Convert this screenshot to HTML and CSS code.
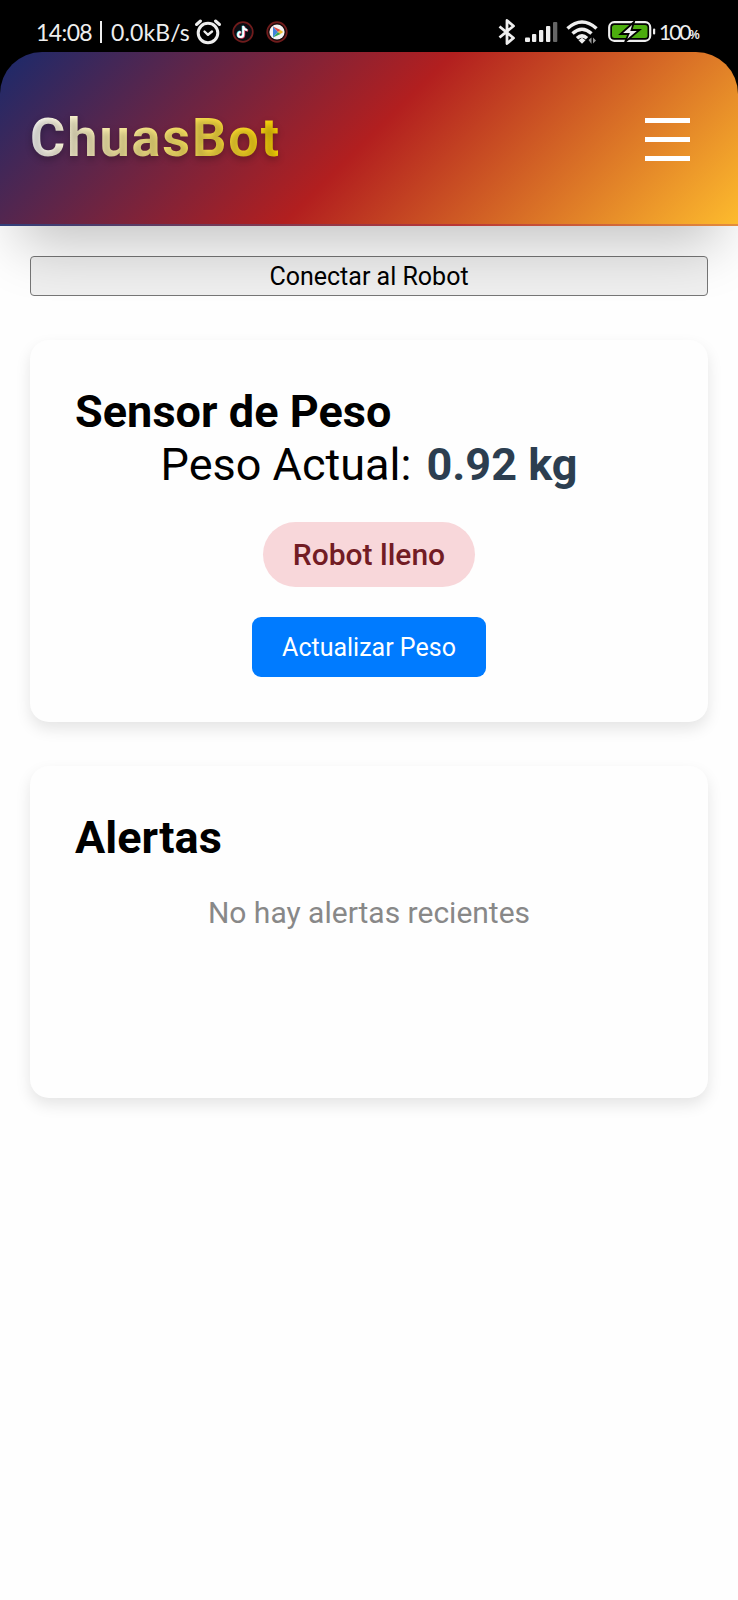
FILE: index.html
```html
<!DOCTYPE html>
<html lang="es">
<head>
<meta charset="utf-8">
<title>ChuasBot</title>
<link rel="stylesheet" href="styles.css">
</head>
<body>
<div class="top">
  <div class="status">
    <div class="status-left">
      <span class="clock">14:08</span><span class="divider"></span><span class="speed">0.0kB/s</span>
      <svg class="alarm" width="28" height="28" viewBox="0 0 28 28" fill="none" stroke="#eee" stroke-linecap="round" stroke-linejoin="round"><circle cx="14" cy="15" r="9.800" stroke-width="3"/><path d="M10.500 13.500l3.500 3.300 4-3.300" stroke-width="2.400"/><path d="M2.500 6.500L6.500 3M21.500 3L25.500 6.500" stroke-width="3"/></svg>
      <svg class="tiktok" width="22" height="22" viewBox="0 0 22 22" fill="none"><circle cx="11" cy="11" r="9.800" fill="#0b0c12" stroke="#701c1c" stroke-width="1.700"/><path d="M11.300 5v8.500a2.600 2.600 0 1 1-2.600-2.600M11.300 5c.3 2.500 1.700 3.800 4 4" stroke="#e8436a" stroke-width="2.200" transform="translate(.8 .6)"/><path d="M11.300 5v8.500a2.600 2.600 0 1 1-2.600-2.600M11.300 5c.3 2.500 1.700 3.800 4 4" stroke="#43d5df" stroke-width="2.200" transform="translate(-.5 -.3)"/><path d="M11.300 5v8.500a2.600 2.600 0 1 1-2.600-2.600M11.300 5c.3 2.500 1.700 3.800 4 4" stroke="#fff" stroke-width="2"/></svg>
      <svg class="play" width="22" height="22" viewBox="0 0 22 22"><circle cx="11" cy="11" r="9.800" fill="#1a0b0b" stroke="#701c1c" stroke-width="1.700"/><circle cx="11" cy="11" r="7.600" fill="#f4f4f4"/><path d="M7 5.600v10.800l5-5.400z" fill="#3f83dc"/><path d="M7 5.600l5 5.400 2.600-1.900z" fill="#e34a43"/><path d="M7 16.400l5-5.400 2.600 1.900z" fill="#35a855"/><path d="M12 11l2.600-1.900 2.600 1.900-2.600 1.900z" fill="#f2bd2e"/></svg>
    </div>
    <div class="status-right">
      <svg width="18" height="28" viewBox="0 0 18 28" fill="none" stroke="#eee" stroke-width="2.800" stroke-linejoin="round"><path d="M1.500 8.500l14 11.500L9 25.500V2.500l6.500 5.500L1.500 19.500"/></svg>
      <svg class="signal" width="34" height="22" viewBox="0 0 34 22" fill="#eee"><rect x="0" y="16.500" width="5" height="4.500" rx="1"/><rect x="7" y="13" width="4.300" height="8" rx="1"/><rect x="14" y="9" width="4.300" height="12" rx="1"/><rect x="21" y="5" width="4.300" height="16" rx="1"/><rect x="28" y="1" width="4.300" height="20" rx="1" fill="#666"/></svg>
      <svg class="wifi" width="32" height="26" viewBox="0 0 32 26" fill="none" stroke="#eee" stroke-width="3.500"><path d="M1.500 9.500Q16-3.500 30.500 9.500M6.500 14.500Q16 6 25.500 14.500M11 19.300Q16 14.500 21 19.300"/><path d="M16 18.800l3.500 2.500-3.500 3.500-3.500-3.500z" fill="#eee" stroke="none"/><path d="M22.500 21l3-2.500v6.500zM27 18.500l3 3-3 3z" fill="#999" stroke="none"/></svg>
      <svg class="battery" width="48" height="24" viewBox="0 0 48 24"><rect x="1.200" y="2.200" width="41" height="18.600" rx="5" fill="#000" stroke="#eee" stroke-width="2.200"/><rect x="4" y="5" width="35.500" height="13" rx="2.500" fill="#4cad0e"/><path d="M26 2L12.500 14h8L17 22 31.500 10h-8z" fill="#eee" stroke="#000" stroke-width="1.800"/><rect x="45" y="8.500" width="2.200" height="6" rx="1" fill="#eee"/></svg>
      <span class="level">100</span><span class="percent">%</span>
    </div>
  </div>
  <header class="header">
    <h1 class="logo">ChuasBot</h1>
    <div class="menu"><span class="bar"></span><span class="bar"></span><span class="bar"></span></div>
  </header>
</div>
<main class="content">
  <button class="connect">Conectar al Robot</button>
  <section class="card weight">
    <h2 class="title">Sensor de Peso</h2>
    <p class="reading">Peso Actual: <strong class="value">0.92 kg</strong></p>
    <div class="state">Robot lleno</div>
    <button class="refresh">Actualizar Peso</button>
  </section>
  <section class="card alerts">
    <h2 class="title">Alertas</h2>
    <p class="empty">No hay alertas recientes</p>
  </section>
</main>
</body>
</html>
```
FILE: styles.css
```css
* { box-sizing: border-box; margin: 0; padding: 0; }
body { background: #fefefe; font-family: Roboto, sans-serif; color: #000; min-height: 1600px; }
.top { position: relative; z-index: 2; background: linear-gradient(#000 120px, transparent 120px); }
.status { height: 52px; padding: 18px 37px 0 36px; display: flex; justify-content: space-between; color: #eee; font-family: Lato, sans-serif; font-size: 23px; line-height: 28px; }
.status-left, .status-right { display: flex; align-items: center; height: 28px; white-space: nowrap; }
.clock { width: 56px; letter-spacing: -.6px; }
.divider { width: 2px; height: 22px; background: #eee; margin: 0 9px 0 8px; }
.speed { width: 80px; letter-spacing: .1px; }
.alarm { margin-left: 3px; }
.tiktok { margin-left: 10px; }
.play { margin-left: 12px; }
.signal { margin-left: 9px; }
.wifi { margin-left: 7px; }
.battery { margin-left: 10px; }
.level { margin-left: 3px; width: 30px; font-size: 21px; letter-spacing: -2px; }
.percent { font: 700 12px/28px "Liberation Sans", sans-serif; width: 12px; margin-top: 5px; }
.header { height: 174px; border-radius: 42px 42px 0 0; border-bottom: 2px solid rgba(255,255,255,.1); padding: 0 48px 0 30px; display: flex; align-items: center; justify-content: space-between; background-image: linear-gradient(135deg, #1a2a6c, #b21f1f, #fdbb2d); box-shadow: 0 38px 56px -19px rgba(0,0,0,.23); }
.logo { font-size: 54px; line-height: 64px; font-weight: 700; letter-spacing: 1.900px; color: transparent; background: linear-gradient(to right, #fff, #ffd700); background-clip: text; -webkit-background-clip: text; text-shadow: 0 3px 7px rgba(0,0,0,.27); margin-top: -1px; }
.menu { display: grid; gap: 13.300px; width: 45px; margin-top: 3px; }
.bar { height: 5.700px; background: #fff; }
.content { padding: 30px; }
.connect { display: block; width: 100%; height: 40px; padding-top: 1px; border: 1.500px solid #767676; border-radius: 4px; background: #efefef; font: 25px/30px Roboto, sans-serif; color: #000; }
.card { margin-top: 44px; border-radius: 19px; background: #fefefe; padding: 45px; box-shadow: 0 7px 15px rgba(0,0,0,.1); }
.weight { height: 382px; display: flex; flex-direction: column; align-items: center; }
.title { align-self: flex-start; font-size: 45px; line-height: 53px; font-weight: 700; letter-spacing: .05px; }
.reading { font-size: 45px; line-height: 53px; }
.value { color: #2c3e50; font-weight: 700; margin-left: 4px; }
.state { margin-top: 31px; height: 65px; padding: 0 30.300px; border-radius: 38px; background: #f8d7da; color: #721c24; font-size: 30px; line-height: 65px; font-weight: 500; }
.refresh { margin-top: 30px; height: 60px; padding: 1px 30px 0; border: 0; border-radius: 9px; background: #007bff; color: #fff; font: 25px/30px Roboto, sans-serif; }
.alerts { height: 332px; }
.empty { margin-top: 31px; text-align: center; color: #888; font-size: 30px; line-height: 35px; }
```
